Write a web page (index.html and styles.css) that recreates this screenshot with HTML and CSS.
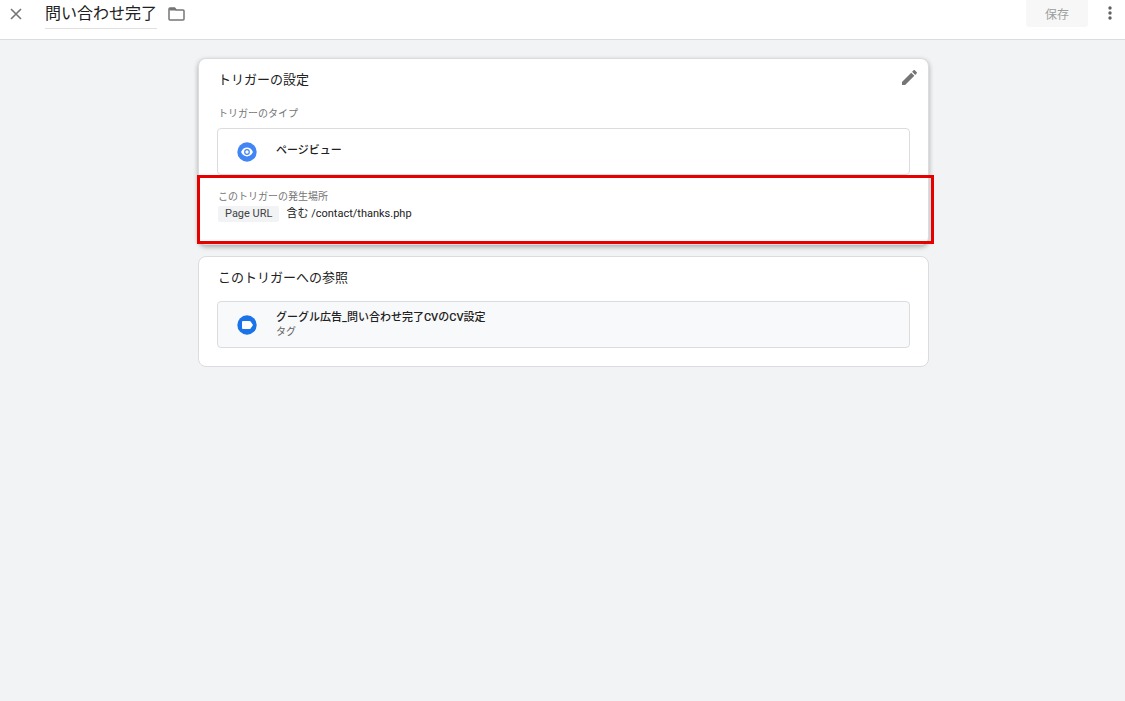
FILE: index.html
```html
<!DOCTYPE html>
<html lang="ja">
<head>
  <meta charset="UTF-8" />
  <meta name="viewport" content="width=device-width, initial-scale=1" />
  <title>問い合わせ完了</title>
  <link rel="stylesheet" href="styles.css">
</head>
<body>
  <header class="topbar">
    <button class="icon-btn close" type="button" aria-label="閉じる">
      <svg width="12" height="12" viewBox="0 0 12 12"><path d="M1 1l10 10M11 1L1 11" fill="none" stroke="#757575" stroke-width="1.6"/></svg>
    </button>
    <h1 class="name">問い合わせ完了</h1>
    <button class="icon-btn folder" type="button" aria-label="フォルダ">
      <svg width="17" height="14" viewBox="0 0 17 14"><path d="M2 1h4.6l1.6 2H15q1 0 1 1v8q0 1-1 1H2q-1 0-1-1V2q0-1 1-1z" fill="none" stroke="#757575" stroke-width="1.5"/><path d="M1.5 1h5l1.7 2.4H1.5z" fill="#757575"/></svg>
    </button>
    <button class="save" type="button" disabled>保存</button>
    <button class="icon-btn more" type="button" aria-label="その他">
      <svg width="4" height="14" viewBox="0 0 4 14" fill="#616161"><circle cx="2" cy="2" r="1.7"/><circle cx="2" cy="7" r="1.7"/><circle cx="2" cy="12" r="1.7"/></svg>
    </button>
  </header>

  <main class="content">
    <section class="card raised">
      <div class="card-head">
        <h2>トリガーの設定</h2>
        <button class="icon-btn" type="button" aria-label="編集">
          <svg width="15" height="15" viewBox="3 3 18 18" fill="#757575"><path d="M3 17.25V21h3.75L17.81 9.94l-3.75-3.75L3 17.25zM20.71 7.04c.39-.39.39-1.02 0-1.41l-2.34-2.34c-.39-.39-1.02-.39-1.41 0l-1.83 1.83 3.75 3.75 1.83-1.83z"/></svg>
        </button>
      </div>
      <h3 class="label type-label">トリガーのタイプ</h3>
      <div class="item">
        <svg class="item-icon" width="20" height="20" viewBox="0 0 20 20"><circle cx="10" cy="10" r="9.7" fill="#4285f4"/><path d="M4 10Q6.2 5.6 10 5.6T16 10Q13.8 14.4 10 14.4T4 10z" fill="#fff"/><circle cx="10" cy="10" r="2.3" fill="#fff" stroke="#4285f4" stroke-width="1.2"/></svg>
        <div class="item-text">
          <strong>ページビュー</strong>
        </div>
      </div>
      <div class="condition">
        <h3 class="label">このトリガーの発生場所</h3>
        <p><span class="chip">Page URL</span>含む /contact/thanks.php</p>
      </div>
    </section>

    <section class="card">
      <div class="card-head">
        <h2>このトリガーへの参照</h2>
      </div>
      <div class="item linked">
        <svg class="item-icon" width="20" height="20" viewBox="0 0 20 20"><circle cx="10" cy="10" r="9.7" fill="#1a73e8"/><path d="M6 6h6.5q.7 0 1.1.5L16 10l-2.4 3.5q-.4.5-1.1.5H6q-1 0-1-1V7q0-1 1-1z" fill="#fff"/></svg>
        <div class="item-text">
          <strong>グーグル広告_問い合わせ完了CVのCV設定</strong>
          <small>タグ</small>
        </div>
      </div>
    </section>
  </main>
</body>
</html>
```
FILE: styles.css
```css
* {
  box-sizing: border-box;
}
body {
  margin: 0;
  min-height: 100vh;
  background: #f1f3f4;
  color: #212121;
  font-family: Roboto, "Noto Sans CJK JP", sans-serif;
  font-size: 12px;
}
h1, h2, h3, p {
  margin: 0;
  font-weight: 400;
}
svg {
  display: block;
}
button {
  border: 0;
  font-family: inherit;
}
.icon-btn {
  padding: 0;
  background: none;
  cursor: pointer;
}

.topbar {
  display: flex;
  align-items: flex-start;
  height: 40px;
  padding: 0 13px 0 10px;
  background: #fff;
  border-bottom: 1px solid #dadce0;
}
.close {
  margin: 8px 23px 0 0;
}
.name {
  border-bottom: 1px solid #e0e0e0;
  font-size: 16px;
  line-height: 28px;
}
.folder {
  margin: 7px 0 0 11px;
}
.save {
  width: 62px;
  height: 27px;
  margin-left: auto;
  padding: 0;
  background: #f7f7f7;
  border-radius: 0 0 3px 3px;
  color: #9e9e9e;
  font-size: 12px;
}
.more {
  margin: 6px 0 0 20px;
}

.content {
  display: flex;
  flex-direction: column;
  gap: 11px;
  padding: 18px 196px 0 198px;
}
.card {
  padding: 11px 18px 18px;
  background: #fff;
  border: 1px solid #dadce0;
  border-radius: 8px;
}
.raised {
  padding-bottom: 0;
  box-shadow: 0 2px 5px rgba(0, 0, 0, 0.3);
}
.card-head {
  display: flex;
  align-items: flex-start;
  justify-content: space-between;
  padding: 0 1px;
}
.card-head h2 {
  font-size: 13px;
  line-height: 20px;
}
.card-head .icon-btn {
  margin-right: -8px;
}
.label {
  color: #757575;
  font-size: 10px;
  line-height: 16px;
}
.type-label {
  padding: 16px 1px 6px;
}
.item {
  display: flex;
  align-items: center;
  gap: 19px;
  min-height: 47px;
  padding: 0 19px;
  border: 1px solid #dadce0;
  border-radius: 4px;
}
.item-text {
  display: flex;
  flex-direction: column;
  padding-bottom: 2px;
}
.item-text strong {
  font-size: 11px;
  font-weight: 500;
  line-height: 16px;
}
.item-text small {
  color: #616161;
  font-size: 10px;
  line-height: 12px;
}
.linked {
  margin-top: 13px;
}
.linked {
  background: #f8f9fa;
}

.condition {
  position: relative;
  padding: 14px 1px 21px;
}
/* red frame around the firing condition, wider than the card */
.condition::after {
  content: "";
  position: absolute;
  inset: 0 -24px 0 -20px;
  border: 3px solid #e60000;
}
.condition p {
  font-size: 11px;
  line-height: 18px;
}
.chip {
  display: inline-block;
  margin-right: 7px;
  padding: 0 7px;
  background: #f1f3f4;
  border-radius: 2px;
  color: #424242;
  line-height: 16px;
}
```
